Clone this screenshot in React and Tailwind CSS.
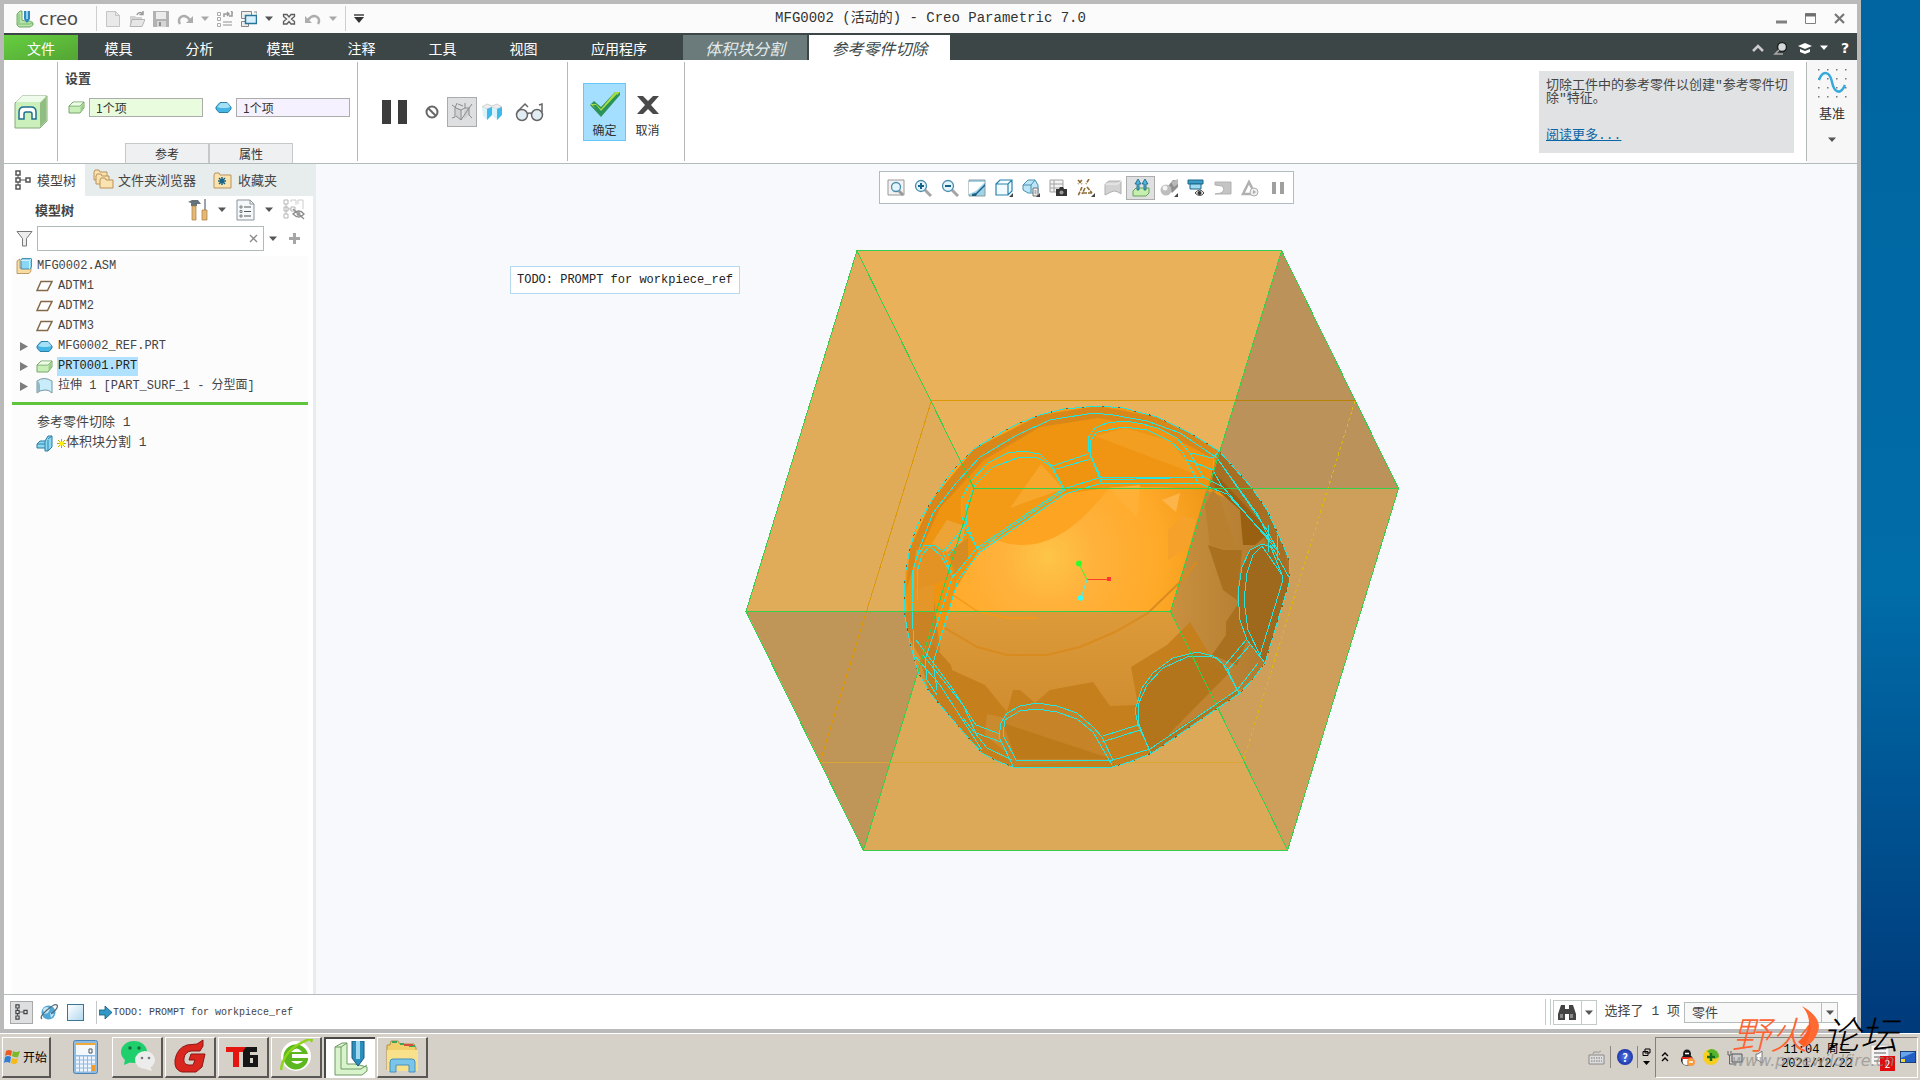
import clsx from 'clsx';

const CJK = "font-['Noto_Sans_CJK_SC',sans-serif]";
const MONO = "font-['Liberation_Mono','Noto_Sans_CJK_SC',monospace]";

function Svg({ w = 16, h = w, box, className, children }) {
  return (
    <svg width={w} height={h} viewBox={box || `0 0 ${w} ${h}`} fill="none" className={clsx('shrink-0', className)} aria-hidden="true">
      {children}
    </svg>
  );
}

const Arrow = ({ color = '#555' }) => (
  <Svg w={8} h={5}><path d="M0 0.500h8L4 5z" fill={color} /></Svg>
);

/* ---------- title bar icons ---------- */
const CreoMark = ({ size = 18 }) => (
  <Svg w={size} h={size} box="0 0 18 18">
    <path d="M1 4l3-3h2v9l3 1h5l3 2v2l-3 2H3l-2-2z" fill="#b9e3a9" stroke="#4f9a4a" strokeWidth=".8" />
    <path d="M1 14h13l3-2M3 4v9" stroke="#6db566" strokeWidth=".8" />
    <path d="M8 1h6v8l-3 4-3-4z" fill="#2f89bf" />
    <path d="M10 1h2v8h-2z" fill="#8ed0ee" />
  </Svg>
);

const NewIcon = () => (
  <Svg><path d="M1.500.5h9l4 4v11h-13z" fill="#e9e9e9" stroke="#c4c4c4" /><path d="M10.500.5v4h4" stroke="#c4c4c4" /></Svg>
);
const OpenIcon = () => (
  <Svg>
    <path d="M1 5h5l1 1h6v9H1z" fill="#d2d2d2" />
    <path d="M3 8.500h13L13 15.500H1z" fill="#e6e6e6" stroke="#b5b5b5" />
    <path d="M8 4c1-3 4-3 6-1M14 0v3.500h-3.500" stroke="#999" strokeWidth="1.500" />
  </Svg>
);
const SaveIcon = () => (
  <Svg>
    <path d="M0 0h16v16H0z" fill="#b2b2b2" />
    <path d="M3 1h10v7H3z" fill="#ececec" />
    <path d="M4 10h9v6H4z" fill="#d6d6d6" /><path d="M6 11h2v4H6z" fill="#8f8f8f" />
  </Svg>
);
const RedoIcon = ({ flip }) => (
  <Svg className={flip ? '-scale-x-100' : ''}>
    <path d="M3 13C-1 7 7 1 13 9" stroke="#adadad" strokeWidth="2.500" /><path d="M16 5v7H9z" fill="#adadad" />
  </Svg>
);
const RegenIcon = () => (
  <Svg>
    <path d="M.5 1.500h3v3h-3zM.5 6.500h3v3h-3zM.5 12.500h3v3h-3z" stroke="#aaa" />
    <path d="M6 14h9M6 11h9" stroke="#b5b5b5" strokeWidth="1.500" />
    <path d="M7 6V3h4M10 1l2 2-2 2M15 1v4h-3M14 0l2 2" stroke="#999" strokeWidth="1.500" />
  </Svg>
);
const WindowsIcon = () => (
  <Svg>
    <path d="M.5.5h10v7H.5z" fill="#eee" stroke="#888" /><path d="M.5 10.500h7v5h-7z" fill="#eee" stroke="#888" />
    <path d="M4.500 4.500h11v8h-11z" fill="#d8f0fb" stroke="#25759c" strokeWidth="1.500" />
    <path d="M13 1h3v3" stroke="#888" />
  </Svg>
);
const CloseDocIcon = () => (
  <Svg>
    <path d="M2.500 3.500h3.500l2 2.500 2-2.500h3.500v2L10.500 8l3 2.500v2.500h-3.500L8 10.500 6 13H2.500v-2.500l3-2.500-3-2.500z" fill="#f4f4f4" stroke="#5e5e5e" strokeWidth="1.300" />
  </Svg>
);

function QuickAccess() {
  const gray = '#a8a8a8';
  return (
    <div className="flex items-center gap-2 pl-3">
      <div className="flex w-[72px] items-center gap-[5px]">
        <CreoMark />
        <span className="font-['DejaVu_Sans',sans-serif] text-[18px] leading-[20px] text-[#4c4c4c]">creo</span>
      </div>
      <span className="h-[25px] w-px bg-[#cfcfcf]" />
      {[NewIcon, OpenIcon, SaveIcon, RedoIcon].map((Icon, i) => (
        <button key={i}><Icon /></button>
      ))}
      <Arrow color={gray} />
      <button><RegenIcon /></button>
      <button><WindowsIcon /></button>
      <Arrow />
      <button><CloseDocIcon /></button>
      <button><RedoIcon flip /></button>
      <Arrow color={gray} />
      <span className="h-[25px] w-px bg-[#cfcfcf]" />
      <Svg w={10} h={9}><path d="M0 1h10" stroke="#444" strokeWidth="1.500" /><path d="M0 3h10L5 9z" fill="#333" /></Svg>
    </div>
  );
}

function TitleBar() {
  return (
    <header className="grid h-[29px] grid-cols-[1fr_auto_1fr] items-center bg-[#fbfbfb]">
      <QuickAccess />
      <h1 className={`${MONO} text-[14px] text-[#333] whitespace-pre`}>MFG0002 (活动的) - Creo Parametric 7.0</h1>
      <div className="flex justify-end gap-[18px] pr-3">
        <button><Svg w={11}><path d="M0 9h11" stroke="#808080" strokeWidth="3" /></Svg></button>
        <button><Svg w={11}><path d="M.5.5h10v10H.5z" fill="#fff" stroke="#808080" /><path d="M0 2h11" stroke="#707070" strokeWidth="3" /></Svg></button>
        <button><Svg w={11}><path d="M1 1l9 9M10 1l-9 9" stroke="#777" strokeWidth="2.200" /></Svg></button>
      </div>
    </header>
  );
}

function MenuBar() {
  const menus = ['模具', '分析', '模型', '注释', '工具', '视图'];
  return (
    <nav className={`${CJK} flex h-[27px] bg-[#3c4646] pt-[2px] text-[14px] leading-[24px] text-white`}>
      <button className="w-[74px] bg-linear-to-br from-[#66cf40] to-[#53a534]">文件</button>
      {menus.map((m) => (
        <button key={m} className="w-[81px]">{m}</button>
      ))}
      <button className="mr-[9px] w-[110px]">应用程序</button>
      <button className="mr-[2px] w-[124px] bg-[#6b7b7b] text-[16px] text-[#e4eaea] italic">体积块分割</button>
      <button className="w-[141px] bg-white text-[16px] text-[#3c4646] italic">参考零件切除</button>
      <div className="ml-auto flex items-center gap-2 pr-[3px]">
        <Svg w={12} h={8}><path d="M1 7l5-5 5 5" stroke="#ccc" strokeWidth="2.500" /></Svg>
        <Svg w={18} h={16}><circle cx="10" cy="7" r="4.500" fill="#d5dbdb" stroke="#222" strokeWidth="1.500" /><path d="M7 10l-4 4h8" stroke="#aaa" strokeWidth="1.500" /></Svg>
        <Svg w={14} h={16}><path d="M0 6l7-3 7 3-7 3z" fill="#fff" /><path d="M2 9l5 2 5-2v3l-5 2-5-2z" fill="#fff" /></Svg>
        <Arrow color="#fff" />
        <button className="w-[18px] font-['DejaVu_Sans',sans-serif] text-[14px] font-bold">?</button>
      </div>
    </nav>
  );
}

/* ---------- part icons shared by ribbon and tree ---------- */
const GreenBlock = () => (
  <Svg w={17} h={13}>
    <path d="M1 5l4-4h11v6l-4 5H1z" fill="#c9efb8" stroke="#79a56e" /><path d="M1 5h11l4-4" stroke="#79a56e" />
    <path d="M2 4.500L5.500 1.500h9.500L12 4.500z" fill="#eefbe8" /><path d="M12.500 6l3-4v5l-3 4z" fill="#98cf88" />
  </Svg>
);
const BluePart = () => (
  <Svg w={17} h={13}>
    <path d="M1 6l4-4.500h7L16 6v2l-3 3.500H4L1 8z" fill="#45b6e4" stroke="#2c7fa8" />
    <path d="M2 6l4-4h6l3.500 4-4 1H6z" fill="#a6e0f7" />
  </Svg>
);

const RibbonDivider = () => <span className="my-[2px] w-px self-stretch bg-[#b4b8b8]" />;

function RefField({ id, label, Icon, className }) {
  return (
    <div className="flex items-center gap-1">
      <label htmlFor={id} aria-label={label}><Icon /></label>
      <input
        id={id}
        defaultValue="1个项"
        className={clsx('h-[19px] w-[114px] border border-[#acacac] px-[6px] text-[12px] text-[#333] outline-none', CJK, className)}
      />
    </div>
  );
}

function Ribbon() {
  return (
    <section className={`${CJK} flex h-[104px] border-b border-[#b4bbbb] bg-white text-[#333]`}>
      <div className="flex w-[53px] items-center justify-center">
        <Svg w={34}>
          <path d="M1 8l7-7h25v25l-7 7H1z" fill="#ccf0bc" stroke="#88a97e" />
          <path d="M2 7l6-6h24l-6 6z" fill="#effbea" /><path d="M26 8l6-6v24l-6 6z" fill="#8fbd82" />
          <path d="M5 24v-7q0-5 5-5h7q5 0 5 5v7h-4v-5q0-2-2-2h-4q-2 0-2 2v5z" fill="#fff" stroke="#1d7090" strokeWidth="1.500" />
        </Svg>
      </div>
      <RibbonDivider />
      <div className="flex w-[299px] flex-col pt-2 pr-1">
        <h2 className="pl-[7px] text-[13px] leading-[20px] font-bold text-[#444]">设置</h2>
        <div className="mt-[10px] flex gap-[12px] pl-[10px]">
          <RefField id="workpiece" label="工件" Icon={GreenBlock} className="bg-[#e9fcdd]" />
          <RefField id="refpart" label="参考零件" Icon={BluePart} className="bg-[#f5f1fe]" />
        </div>
        <div className="mt-auto flex pl-[67px]">
          <button className="h-[20px] w-[84px] border border-b-0 border-[#c4c8c8] bg-[#eff0f1] text-[12px]">参考</button>
          <button className="h-[20px] w-[84px] border border-b-0 border-[#c4c8c8] bg-[#eff0f1] text-[12px]">属性</button>
        </div>
      </div>
      <RibbonDivider />
      <div className="flex w-[209px] items-center pl-6">
        <button className="mr-[18px]"><Svg w={25} h={24}><path d="M0 0h9v24H0zM16 0h9v24h-9z" fill="#3c3c3c" /></Svg></button>
        <button className="mr-2"><Svg w={14}><circle cx="7" cy="7" r="5.500" stroke="#666" strokeWidth="2" /><path d="M3 3l8 8" stroke="#666" strokeWidth="2" /></Svg></button>
        <button className="flex h-[30px] w-[30px] items-center justify-center border border-[#ababab] bg-[#dedfe0]">
          <Svg w={22} h={20}>
            <path d="M5 6l5 2v9l-5-3zM13 8l5-2v7l-5 4z" fill="#d0d1d2" />
            <path d="M1 3l4 3 5 2 4-2 4 0 3-4M6 1L4 6v9l-3 1M10 8v10l-5-4M10 18l8-12M14 1v5M18 6v7l3 3M7 2l5 2" stroke="#8a8a8a" />
          </Svg>
        </button>
        <button className="mx-[5px]">
          <Svg w={20} h={18}>
            <path d="M0 4l5-3 5 2 5-2 5 3-5 2-5-2-5 2z" fill="#eee" stroke="#aaa" strokeWidth=".5" />
            <path d="M0 4l5 2v11l-4-4zM10 4l5 2v11l-5-5z" fill="#d9f3fd" /><path d="M5 6l5-2v8l-5 5zM15 6l5-2v8l-5 5z" fill="#3fb9ea" />
          </Svg>
        </button>
        <button className="ml-2">
          <Svg w={30} h={20}>
            <circle cx="7" cy="13" r="5.500" fill="#e2edf3" stroke="#666" strokeWidth="1.500" /><circle cx="22" cy="13" r="5.500" fill="#e2edf3" stroke="#666" strokeWidth="1.500" />
            <path d="M12 12q3-2 5 0M2 10l8-8 3 3M27 10V2l-3 1" stroke="#666" strokeWidth="1.500" />
          </Svg>
        </button>
      </div>
      <RibbonDivider />
      <div className="flex w-[116px] items-start pt-[23px] pl-[15px] text-[12px] leading-[16px]">
        <button className="flex h-[58px] w-[43px] flex-col items-center justify-end border border-[#66c8fa] bg-[#a5dfff] pb-[2px]">
          <Svg w={32} h={28} className="mb-1">
            <path d="M1 15l4-4 7 6L26 2h5v3L12 27z" fill="#2f9457" /><path d="M1 14h6l5 5L26 2h5L12 22z" fill="#a8dc3f" /><path d="M4 15h3l5 6L28 4v2L12 25z" fill="#28915c" />
          </Svg>
          确定
        </button>
        <button className="flex h-[58px] w-[43px] flex-col items-center justify-end pb-[3px]">
          <Svg w={22} h={18} className="mb-2"><path d="M0 0h6l5 5 5-5h6l-8 9 8 9h-6l-5-5-5 5H0l8-9z" fill="#4a4a4a" /></Svg>
          取消
        </button>
      </div>
      <RibbonDivider />
      <div className="ml-auto flex">
        <div className={`${MONO} mt-[11px] mr-3 flex h-[82px] w-[255px] flex-col bg-[#e0e2e3] pt-[8px] pl-[7px] text-[13px] leading-[13px] text-[#444]`}>
          <p className="whitespace-pre">{'切除工件中的参考零件以创建"参考零件切\n除"特征。'}</p>
          <a href="#more" className="mt-[24px] text-[#0b66a8] underline">阅读更多...</a>
        </div>
        <RibbonDivider />
        <button className="flex w-[50px] flex-col items-center bg-[#f7f7f7] pt-2 text-[13px] leading-[18px]">
          <Svg w={30}>
            {[1, 10, 19, 28].map((y) => [1, 10, 19, 28].map((x) => <path key={`${x}${y}`} d={`M${x} ${y}h1.500v1.500h-1.500z`} fill="#777" />))}
            <path d="M2 12C6 1 13 4 15 14s8 14 13 3" stroke="#35a9dc" strokeWidth="2.500" />
          </Svg>
          <span className="mt-[6px] mb-[15px]">基准</span>
          <Arrow />
        </button>
      </div>
    </section>
  );
}

/* ---------- model tree ---------- */
const TreeGlyph = ({ color = '#555' }) => (
  <Svg w={16} h={20}>
    <path d="M1 1h4v4H1zM1 8h4v4H1zM1 15h4v4H1zM11 8h4v4h-4z" stroke={color} strokeWidth="1.500" />
    <path d="M3 5v3M3 12v3M5 10h6" stroke={color} />
  </Svg>
);
const Folder = ({ x, y, w = 13, h = 10 }) => (
  <path d={`M${x} ${y + 2}l1-2h4l1 2h${w - 6}v${h - 2}H${x}z`} fill="#fbe3b0" stroke="#b9925c" />
);
const AsmIcon = () => (
  <Svg w={16}><path d="M1 3l3-2v9h11v3l-2 2.500H1z" fill="#fbdca0" stroke="#ad8850" strokeWidth=".8" /><path d="M5 2.500l1-2h9.500V9L14 11H5z" fill="#8ad6f4" stroke="#2a7aa2" strokeWidth=".8" /><path d="M5 2.500h8.500l2-2M13.500 3v8" stroke="#e3f6fd" strokeWidth=".8" /></Svg>
);
const PlaneIcon = () => (
  <Svg w={17} h={12}><path d="M5 1.500h11l-4.500 9H1z" fill="#fff" stroke="#83694a" strokeWidth="1.500" /></Svg>
);
const SurfIcon = () => (
  <Svg w={17}><path d="M1 3q7-5 15 0v12q-3-3-6-3t-6 1l-3 2z" fill="#c9ecfa" stroke="#7497a5" /><path d="M1 3q3 1 3 5v5l-3 2z" fill="#92b6c4" /></Svg>
);
const SplitIcon = () => (
  <Svg w={17} h={17}><path d="M1 9l3-3h5l3-5h4v11l-4 4H9v-3H1z" fill="#8fd6f0" stroke="#287a9f" /><path d="M9 6v7M12 5v11M1 9h8M12 4l4-3" stroke="#2b86ad" /></Svg>
);
const Twisty = () => <Svg w={8} h={9}><path d="M0 0l8 4.500L0 9z" fill="#7d7d7d" /></Svg>;

const TREE = [
  { label: 'ADTM1', Icon: PlaneIcon },
  { label: 'ADTM2', Icon: PlaneIcon },
  { label: 'ADTM3', Icon: PlaneIcon },
  { label: 'MFG0002_REF.PRT', Icon: BluePart, open: true },
  { label: 'PRT0001.PRT', Icon: GreenBlock, open: true, selected: true },
  { label: '拉伸 1 [PART_SURF_1 - 分型面]', Icon: SurfIcon, open: true },
];

function Sidebar() {
  return (
    <aside className={`${CJK} flex w-[312px] flex-col border-r-[3px] border-[#e7ecec] bg-white text-[#444]`}>
      <div className="-mr-[3px] flex h-[32px] bg-[#e7ecec] pb-px text-[13px]">
        <button className="-mb-px flex w-[81px] items-center gap-[6px] bg-white pl-[11px]"><TreeGlyph />模型树</button>
        <button className="flex w-[119px] items-center gap-1 pl-2">
          <Svg w={21}><Folder x={1} y={1} /><Folder x={3} y={5} /><Folder x={7} y={9} /></Svg>文件夹浏览器
        </button>
        <button className="flex items-center gap-[6px] pl-[9px]">
          <Svg w={19} h={18}><Folder x={1} y={2} w={17} h={15} /><path d="M9 6v8M5 10h8M6 7l6 6M12 7l-6 6" stroke="#17658a" strokeWidth="1.500" /></Svg>收藏夹
        </button>
      </div>
      <div className="flex h-[27px] items-center pr-2 pl-[31px]">
        <h2 className="mr-auto text-[13px] font-bold">模型树</h2>
        <div className="flex items-center gap-[10px]">
          <Svg w={20} h={22}>
            <path d="M0 3l4-2h6l3 4H9v2H3V4z" fill="#66727a" /><path d="M4 7h4v14H4z" fill="#e4b876" stroke="#a97d40" strokeWidth=".7" />
            <path d="M16 0h2v11h-2z" fill="#9aa4aa" /><path d="M14 11h5v10h-5z" fill="#e4b876" stroke="#a97d40" strokeWidth=".7" />
          </Svg>
          <Arrow />
          <Svg w={19} h={22}>
            <path d="M1 1h13l4 4v16H1z" fill="#f4f8fa" stroke="#8b9399" /><path d="M14 1v4h4" stroke="#8b9399" />
            <path d="M8 8h7M8 12.500h7M8 17h7" stroke="#555" /><path d="M4 7h2v2H4zM4 11.500h2v2H4zM4 16h2v2H4z" stroke="#666" strokeWidth=".8" />
          </Svg>
          <Arrow />
          <Svg w={22}>
            <path d="M1 1h4v4H1zM1 8h4v4H1zM1 15h4v4H1zM8 8h4v4H8zM3 5v10M5 10h3" stroke="#b5b5b5" />
            <path d="M8 3V1h5v5M15 5V1h5v9" stroke="#ccc" /><path d="M10 15q6-6 11 0-5 6-11 0zM10 10l11 10" stroke="#8d8d8d" strokeWidth="1.300" /><circle cx="15.500" cy="15" r="2" fill="#999" />
          </Svg>
        </div>
      </div>
      <div className="mb-[2px] flex h-[31px] items-center gap-[4px] pl-3">
        <label htmlFor="tree-filter" aria-label="过滤器">
          <Svg w={17} h={17}><path d="M1 1.500h15l-5.500 7V16h-4V8.500z" fill="#eee" stroke="#777" /></Svg>
        </label>
        <div className="flex h-[25px] w-[227px] items-center border border-[#b0baba]">
          <input id="tree-filter" className="min-w-0 flex-1 px-1 text-[12px] outline-none" />
          <button className="mr-[5px]"><Svg w={9}><path d="M1 1l7 7M8 1L1 8" stroke="#8a8a8a" strokeWidth="1.300" /></Svg></button>
        </div>
        <div className="flex items-center gap-[11px] pl-px">
          <Arrow />
          <button><Svg w={13}><path d="M6.500 1v11M1 6.500h11" stroke="#a6a6a6" strokeWidth="3" /></Svg></button>
        </div>
      </div>
      <div className={`${MONO} mr-[5px] ml-2 flex-1 bg-[#fcfcfc] text-[12px] leading-[20px] whitespace-pre`}>
        <div className="flex h-[20px] items-center gap-[5px] pl-1"><AsmIcon />MFG0002.ASM</div>
        <ul>
          {TREE.map(({ label, Icon, open, selected }) => (
            <li key={label} className="flex h-[20px] items-center gap-[4px] pl-2">
              <span className="w-[12px]">{open && <Twisty />}</span>
              <Icon />
              <span className={clsx('px-[1px] leading-[19px]', selected && 'bg-[#b0e2ff] text-[#222]')}>{label}</span>
            </li>
          ))}
        </ul>
        <div className="my-[6px] h-[3px] bg-[#5fc63c]" />
        <div className="mt-2 h-[20px] pl-[25px] text-[13px]">参考零件切除 1</div>
        <div className="flex h-[20px] items-center gap-1 pl-6 text-[13px]">
          <SplitIcon />
          <span className="flex items-center">
            <Svg w={9} h={9}><path d="M4.500 0v9M0 4.500h9M1 1l7 7M8 1L1 8" stroke="#b5a800" /><path d="M2.500 2.500h4v4h-4z" fill="#ffee00" /></Svg>
            体积块分割 1
          </span>
        </div>
      </div>
    </aside>
  );
}

/* ---------- in-graphics toolbar ---------- */
const Corner = () => <path d="M18 18h-4l4-4z" fill="#444" />;
const Lens = ({ sign }) => (
  <>
    <path d="M11 11l6 6" stroke="#a5a5a5" strokeWidth="3" />
    <circle cx="7" cy="7" r="5.500" fill="#e2f4fc" stroke="#4b8cab" strokeWidth="1.300" />
    {sign && <path d={sign} stroke="#17618a" strokeWidth="2" />}
  </>
);

const VIEW_TOOLS = [
  <><path d="M1 1h16v15H1z" fill="#f2f2f2" stroke="#999" /><path d="M12 12l4 4" stroke="#999" strokeWidth="3" /><circle cx="9" cy="8" r="4.500" fill="#e2f4fc" stroke="#4b8cab" strokeWidth="1.300" /></>,
  <Lens sign="M4 7h6M7 4v6" />,
  <Lens sign="M4 7h6" />,
  <><path d="M1 1h16v16H1z" fill="#9dd4ea" stroke="#8b9a9f" /><path d="M1 3h16L8 12l-7 3z" fill="#fff" /><path d="M4 17v-2l4-1 9-9v2l-8 8-1 2z" fill="#1c5f83" /></>,
  <><path d="M1 5l4-4h12v11l-4 4H1zM1 5h12l4-4M13 5v11" fill="#f2fbff" stroke="#2583ae" strokeWidth="1.200" /><Corner /></>,
  <><path d="M1 6l5-5h7l3 5v8H6l-5-3z" fill="#bce6f7" stroke="#4590b1" /><path d="M1 6h8l4-5M9 6v7" stroke="#4590b1" /><path d="M11 9h5v8h-5z" fill="#eee" stroke="#777" /><path d="M12.500 12h2M12.500 14h2" stroke="#777" /><Corner /></>,
  <><path d="M1 1h13v12H1zM5 1v12M1 5h13M1 9h13" fill="#f3f3f3" stroke="#a2a2a2" /><path d="M7 10h3l1-2h3l1 2h3v7H7z" fill="#333" /><circle cx="12.500" cy="13.500" r="2" fill="#999" /></>,
  <><path d="M1 1l4 4M5 1L1 5M12 0L9 5M5 8l-4 9M8 9L5 15M6 14h10M10 8l5 6" stroke="#8d6c36" strokeWidth="1.600" strokeDasharray="4 1" /><Corner /></>,
  <><path d="M1 5l4-3h12v13l-3-2q-4-2-7 0l-6 3z" fill="#d2d2d2" stroke="#b0b0b0" /><path d="M1 5h13l3-3" stroke="#f2f2f2" /></>,
  <><path d="M1 12l3-3h13v5l-3 3H1z" fill="#c5efaf" stroke="#67a158" /><path d="M5 11V5H3l3-5 3 5H7v6zM12 11V5h-2l3-5 3 5h-2v6z" fill="#4ab4dc" stroke="#195f81" strokeWidth=".8" /></>,
  <><path d="M8 7l5-6h5v7l-6 6z" fill="#8f8f8f" /><path d="M11 3l7-3v5l-4 3z" fill="#b9b9b9" /><circle cx="6" cy="11" r="5.500" fill="#bdbdbd" /><circle cx="5" cy="9" r="2.500" fill="#f3f3f3" /><Corner /></>,
  <><path d="M1 1h15v4H1z" fill="#3a9cc6" stroke="#1c6689" /><path d="M3 5h11v5H3z" fill="#9edaf0" stroke="#1c6689" /><path d="M8 14q5-6 9 0-4 5-9 0z" fill="#eee" stroke="#444" /><circle cx="12.500" cy="14" r="2" fill="#333" /></>,
  <path d="M1 3h16v12H1l6-1q5-3 1-7l-7-1z" fill="#c4c4c4" stroke="#b2b2b2" />,
  <><path d="M8 3l6 12H2z" stroke="#b0b0b0" strokeWidth="2.500" /><circle cx="13" cy="13" r="4" fill="#eee" stroke="#b0b0b0" /><path d="M12 11l3 2-3 2z" fill="#aaa" /></>,
  <path d="M3 3h4v12H3zM11 3h4v12h-4z" fill="#a0a0a0" />,
];

function ViewToolbar() {
  return (
    <div className="relative mx-auto mt-[7px] flex h-[33px] w-[415px] items-center border border-[#b2bbbf] bg-white px-[2px]">
      {VIEW_TOOLS.map((glyph, i) => (
        <button key={i} className={clsx('flex h-[24px] flex-1 items-center justify-center', i === 9 && 'border border-[#adadad] bg-[#dfe0e1]')}>
          <Svg w={18}>{glyph}</Svg>
        </button>
      ))}
    </div>
  );
}

/* ---------- 3D model: workpiece block round the reference part ---------- */
const BALL =
  'M1098 406L1063 409L1040 415L1017 424L995 436L974 449L953 470L932 500L917 526L910 548L906 570L904 590L905 617L910 643L918 672L930 693L963 732L982 753L997 761L1013 767H1112L1130 762L1152 753L1240 693L1254 678L1265 663L1290 580L1289 560L1284 547L1267 510L1252 488L1219 451L1190 433L1157 417L1123 408Z';

const FACETS = [
  // upper shell, between the rim and the front face
  ['M906 600L904 580L913 548L935 505L975 457L1020 430L1070 416L1130 417L1180 433L1222 462L1233 500L1205 490L1165 487H1115L1065 494L978 552L955 590L933 665L912 640Z', '#ef9411'],
  ['M1098 406L1040 415L974 449L932 500L910 548L906 590L916 560L940 508L984 460L1040 427L1098 418L1160 430L1219 462L1219 451L1190 433L1157 417Z', '#d98718'],
  ['M972 505Q980 545 1023 545T1109 488L1063 494L990 545Z', '#fda522'],
  ['M932 543L947 520L965 526L960 560L948 553Z', '#eda437'],
  ['M916 550L935 547L934 611L910 614Z', '#e49728'],
  ['M904 611H934V600L940 650L925 665L910 640Z', '#c98325'],
  ['M948 552L968 538V558L955 575Z', '#d58c22'],
  ['M1110 488L1140 485L1137 518L1125 505L1115 495Z', '#ffb037'],
  ['M1162 500L1180 493L1176 512Z', '#fdb54a'],
  ['M1168 530L1183 515L1196 520L1190 545L1168 560Z', '#f5a12a'],
  // right, inside the shaded side face
  ['M1213 490L1221 500L1237 552L1210 545L1205 505Z', '#b9812f'],
  ['M1219 451L1252 488L1267 510L1284 547L1290 580L1280 570L1262 535L1227 495L1208 488Z', '#a86f22'],
  ['M1212 470L1270 532L1255 545L1243 545L1240 510L1215 488Z', '#9a6011'],
  ['M1208 545L1224 550L1242 550L1237 600L1223 590Z', '#a97020'],
  ['M1238 604L1226 622V635L1212 655L1237 665L1247 640Z', '#a9711f'],
  // lower, below the workpiece horizon
  ['M933 645L951 665L952 670L985 685L1007 712L1013 690H1020L1035 703L1050 690L1093 682L1110 706L1138 705L1131 667L1167 645L1190 622L1210 655L1238 690L1152 753L1112 767H1013L982 753L930 693L920 660Z', '#c57f1c'],
  ['M987 714L1005 718L1001 740L1016 760L985 735Z', '#ca8b2f'],
];

const POCKETS = [
  ['M978 550L965 527L961 513V500L971 481L988 463L1007 453L1023 451L1040 454L1051 465L1065 490Z', '#f39a16', 'M976 547L967 525L966 507L975 485L993 467L1020 457L1038 458L1052 467L1063 488'],
  ['M1102 480L1089 452L1088 438L1095 428L1107 423L1125 421L1143 424L1160 429L1177 438L1190 453L1203 477Z', '#ef9513', 'M1102 484L1090 455V441L1097 432L1123 427L1147 430L1170 441L1183 453L1198 483'],
  ['M914 590L913 570L917 556L925 545H935L943 552L953 578', '#e29323', 'M917 600V572L922 555L930 546L941 556L949 570'],
  ['M1013 766L999 737L1001 723L1007 713L1020 706L1037 703L1057 706L1077 713L1093 727L1102 737L1113 760', '#c78327', 'M1016 760L1003 735L1005 720L1020 711L1037 709L1057 712L1077 719L1093 732L1112 765'],
  ['M1151 753L1138 725L1135 710L1142 688L1153 673L1173 658L1197 652L1213 656L1223 664L1239 693', '#b1761f', 'M1149 749L1138 722V705L1147 685L1163 668L1187 657L1207 656L1217 658L1227 668L1237 690'],
  ['M1265 663L1247 640L1240 620L1238 593L1242 567L1250 550L1262 544L1272 547L1290 579', '#9e691c', 'M1260 655L1248 630L1244 600L1247 573L1253 555L1262 546L1282 575V583'],
];

const SEAMS = [
  'M912 603L913 570L920 547L933 513L957 482L980 457L1017 435L1050 420L1093 413L1113 415L1147 421L1180 433L1217 458L1267 530L1280 555',
  'M1063 489L1102 477H1203L1223 487L1277 550',
  'M1065 494L1102 483H1198L1227 494L1272 542',
  'M1063 489L977 548L952 578L925 660L927 680L937 695',
  'M1065 494L980 552L958 580L933 663L937 690',
  'M1052 466L1088 454M1053 470L1090 459',
  'M943 552L963 528M947 557L967 532',
  'M1190 453L1213 458L1219 451M1188 460L1213 470M1213 458V470L1222 487',
  'M1217 458L1258 515L1270 540M1268 525V552M1277 535V560M1270 545L1282 575',
  'M912 603L914 655L940 685L982 750M916 640L950 685L976 725L1000 734',
  'M923 655L963 705L976 733L1001 742M963 718L987 748L1012 760',
  'M1016 760H1113M1013 767H1112',
  'M1103 736L1138 725M1102 742L1140 730M1113 760L1150 749L1237 690L1258 663',
  'M1225 665L1246 640M1228 670L1250 645M1260 655L1282 583',
];

function Model() {
  return (
    <svg viewBox="316 164 1541 830" className="absolute inset-0 h-full w-full" role="img" aria-label="MFG0002">
      <defs>
        <radialGradient id="glow" gradientUnits="userSpaceOnUse" cx="1048" cy="557" r="210">
          <stop offset="0" stopColor="#fdc548" />
          <stop offset=".22" stopColor="#ffb23c" />
          <stop offset=".55" stopColor="#ffa928" />
          <stop offset="1" stopColor="#e58a0c" />
        </radialGradient>
        <linearGradient id="under" x1="0" y1="0" x2="0" y2="1">
          <stop offset="0" stopColor="#dd9a39" />
          <stop offset="1" stopColor="#c8862c" />
        </linearGradient>
        <linearGradient id="side" x1="0" y1="0" x2="1" y2="0">
          <stop offset="0" stopColor="#c8903f" />
          <stop offset="1" stopColor="#a97228" />
        </linearGradient>
        <clipPath id="ball"><path d={BALL} /></clipPath>
      </defs>
      <path d="M857 251H1281.500L1208 488.500H974Z" fill="#e9b15a" />
      <path d="M857 251L974 488.500L936.500 611H746Z" fill="#e1ac5a" />
      <path d="M1281.500 251L1398.500 488.500H1208Z" fill="#bb9259" />
      <path d="M1208 488.500H1398.500L1287.500 850L1170.500 611Z" fill="#cd9f5b" />
      <path d="M746 611H936.500L863.500 850Z" fill="#bf9558" />
      <path d="M936.500 611H1170.500L1287.500 850H863.500Z" fill="#dca959" />
      <g stroke="#dc9806" shapeRendering="crispEdges">
        <path d="M931.500 400.500H1235M931.500 400.500L820 762" />
        <path d="M1235 400.500H1355" stroke="#b88108" />
        <path d="M820 762.500H1243" stroke="#d9a534" />
        <path d="M1355 401L1243 762" stroke="#e0b90f" strokeDasharray="3 3" />
      </g>
      <g clipPath="url(#ball)">
        <path d={BALL} fill="url(#glow)" />
        <path d="M900 611H1170.500L1295 640V775H900Z" fill="url(#under)" />
        <path d="M1221 440L1300 440V690H1210L1170.500 611Z" fill="url(#side)" />
        {FACETS.map(([d, fill]) => <path key={d} d={d} fill={fill} />)}
        {POCKETS.map(([d, fill]) => <path key={d} d={d} fill={fill} />)}
        <path d="M1041 464L1010 508L1063 489Z" fill="#f7a72c" />
        <path d="M1095 436L1198 475L1170 441L1125 428Z" fill="#f29e20" />
        <path d="M1003 723L1112 759H1016Z" fill="#bd7a1b" />
        <path d="M1195 657L1228 674L1168 735L1150 749L1137 712L1150 680Z" fill="#b3751b" />
        <path d="M1228 674L1237 690L1168 735Z" fill="#c08433" />
        <path d="M1170.500 611L1208 488.500L1221 451L1205 500Z" fill="#b77e31" />
        <path d="M945 628L977 647L1007 655H1047L1080 647L1115 632L1148 613L1180 582L1197 562" stroke="#d98b1f" strokeWidth="2" fill="none" />
        <path d="M953 595L977 611L1007 618H1038" stroke="#f39a18" strokeWidth="1.500" fill="none" />
      </g>
      <g fill="none" shapeRendering="crispEdges">
        <path d={BALL} stroke="#7d5c1f" />
        <path d={BALL} stroke="#29e3dd" strokeDasharray="14 2" />
        <g stroke="#29e3dd">
          {POCKETS.map(([d, , inner]) => <path key={d} d={`${d}${inner}`} />)}
          {SEAMS.map((d) => <path key={d} d={d} />)}
        </g>
        <g stroke="#35cf4d">
          <path d="M857 250.500H1281.500L1398.500 488.500L1287.500 850.500H863.500L746 611.500Z" />
          <path d="M857 251L974 488.500L863.500 850M974 488.500H1398" />
          <path d="M1281.500 251L1170.500 611.500L1287.500 850M1170.500 611.500H746" />
        </g>
      </g>
      <path d="M1087 579.500L1079 564" stroke="#3bf52c" /><circle cx="1079" cy="563.500" r="3" fill="#2dff2d" />
      <path d="M1087 579.500H1109" stroke="#ff3c2c" /><path d="M1107 577h4v4h-4z" fill="#ff3434" />
      <path d="M1087 579.500L1081 598" stroke="#3cf5f5" /><circle cx="1080.500" cy="598" r="2.700" fill="#33ffff" />
    </svg>
  );
}

function Viewport() {
  return (
    <main className="relative flex-1 bg-[#f8f9fc]">
      <Model />
      <ViewToolbar />
      <div className={`${MONO} absolute top-[102px] left-[194px] border border-[#b5d9ee] bg-white px-[6px] text-[12px] leading-[26px] text-[#222]`}>
        TODO: PROMPT for workpiece_ref
      </div>
    </main>
  );
}

function StatusBar() {
  return (
    <footer className="flex h-[35px] items-center border-t border-[#b4bbbe] bg-white pl-[6px] text-[#444]">
      <button className="flex h-[23px] w-[23px] items-center justify-center border border-[#a8a8a8] bg-[#dedfe0]">
        <Svg w={13} h={16} box="0 0 16 20"><path d="M1 1h4v4H1zM1 8h4v4H1zM1 15h4v4H1zM11 8h4v4h-4z" stroke="#444" strokeWidth="1.500" /><path d="M3 5v3M3 12v3M5 10h6" stroke="#444" /></Svg>
      </button>
      <button className="ml-[7px]">
        <Svg w={18}><circle cx="8.500" cy="9.500" r="7" fill="#4da6d6" /><path d="M3 6q4-4 7 0l-2 4-4 1zM10 10l4 1-3 4z" fill="#c5e8f7" /><path d="M2 16Q-1 14 7 7t10-5q2 3-6 9" stroke="#5b6a73" strokeWidth="1.300" /></Svg>
      </button>
      <button className="ml-[9px] h-[17px] w-[17px] border border-[#3c7590] bg-linear-to-br from-white to-[#b3d9ee]" />
      <span className="mr-[2px] ml-3 h-[23px] w-px bg-[#c6c6c6]" />
      <Svg w={13} h={13}><path d="M0 4h6V0l7 6.500L6 13V9H0z" fill="#2f98c6" stroke="#145a7c" strokeWidth=".8" /></Svg>
      <p className={`${MONO} ml-px text-[10px]`}>TODO: PROMPT for workpiece_ref</p>
      <div className="ml-auto flex items-center pr-[19px]">
        <span className="mr-1 h-[26px] w-px bg-[#c4c9c9]" />
        <span className="mr-[2px] h-[26px] w-px bg-[#c4c9c9]" />
        <button className="flex h-[25px] w-[44px] items-center border border-[#c4c9c9]">
          <span className="flex h-full w-[28px] items-center justify-center border-r border-[#c4c9c9]">
            <Svg w={18} h={16}><path d="M3 1h4v4h4V1h4l3 9v6h-7v-6H7v6H0v-6z" fill="#444" /><path d="M2 10h3v4H2zM12 10h3v4h-3z" fill="#8a8a8a" /></Svg>
          </span>
          <span className="flex flex-1 justify-center"><Arrow /></span>
        </button>
        <label htmlFor="filter" className={`${MONO} mr-1 ml-2 text-[13px] whitespace-pre`}>选择了 1 项</label>
        <div className="relative">
          <select id="filter" className={`${CJK} block h-[21px] w-[154px] appearance-none border border-[#b5bcbc] bg-[#f8f8f8] pl-[7px] text-[13px] leading-[18px]`}>
            <option>零件</option>
          </select>
          <span className="pointer-events-none absolute inset-y-0 right-0 flex w-[17px] items-center justify-center border-l border-[#b5bcbc]"><Arrow /></span>
        </div>
      </div>
    </footer>
  );
}

/* ---------- taskbar ---------- */
const TASKS = [
  <>
    <ellipse cx="14" cy="13" rx="13" ry="11" fill="#1fcf6c" /><path d="M5 20l-1 6 7-3z" fill="#1fcf6c" />
    <ellipse cx="25" cy="21" rx="10" ry="9" fill="#ececec" /><path d="M30 27l2 5-7-2z" fill="#ececec" />
    <circle cx="10" cy="9" r="1.700" fill="#176b3b" /><circle cx="19" cy="9" r="1.700" fill="#176b3b" />
    <circle cx="22" cy="19" r="1.300" fill="#777" /><circle cx="29" cy="19" r="1.300" fill="#777" />
  </>,
  <path d="M30 1v6l-3 5h-9q-6 1-7 7-1 6 4 7h5l2-5h-6l2-6h14l-3 13-6 5H9q-8-2-7-12Q4 9 14 6l10-1z" fill="#d9261f" stroke="#8f1512" />,
  <>
    <path d="M0 8h20v5h-7v15H7V13H0z" fill="#e5160f" />
    <path d="M20 8h11v5h-7v3h8v12H17V12zM24 19v5h3v-5z" fill="#161616" fillRule="evenodd" />
  </>,
  <>
    <circle cx="17" cy="17" r="15" fill="#fff" />
    <path d="M29 21A12.500 12.500 0 1 1 29 15H13v4h16zM12 13h11q-5-7-11 0zM12 22q6 6 12 0z" fill="#5db81d" fillRule="evenodd" />
    <path d="M2 31Q4 14 20 5t12-2" stroke="#8ed41b" strokeWidth="2.500" />
  </>,
  <>
    <path d="M2 6l7-4h5v21h8l12 3v4l-5 4H2z" fill="#d9f3cd" stroke="#6d9a62" /><path d="M8 6v22h20l6-4M2 6h6l6-4" stroke="#6d9a62" />
    <path d="M19 0h12v17l-6 8-6-8z" fill="#2b8fbd" stroke="#185a7e" /><path d="M23 0h4v18h-4z" fill="#9ed9f0" />
  </>,
  <>
    <path d="M2 6h3l1-4h7l2 3h14l2 4v22H2z" fill="#f1d06b" stroke="#b6913a" /><path d="M2 11h31v21H2z" fill="#f9e18c" />
    <path d="M7 3h5M15 5h4M24 7h6" stroke="#3fa45b" strokeWidth="2" /><path d="M19 6h9" stroke="#d6503e" strokeWidth="2" />
    <path d="M5 33V23q0-3 3-3h19q3 0 3 3v10h-6v-7H11v7z" fill="#7cc5ea" stroke="#4592bd" />
  </>,
];

const raised = 'border-t border-l border-r-2 border-b-2 border-t-white border-l-white border-r-[#5a5854] border-b-[#5a5854]';

function Taskbar() {
  return (
    <div className={`${CJK} relative flex h-[47px] items-center border-t border-white bg-[#d5d0c8] px-[2px] text-black`}>
      <button className={clsx('flex h-[41px] w-[49px] items-center gap-[2px] pl-px text-[12px]', raised)}>
        <Svg w={17} h={15}>
          <path d="M2 2q3-2 6 0L7 7Q4 5 1 7z" fill="#ea5a26" /><path d="M9 2q3 2 7 0l-2 6q-3 1-6-1z" fill="#7db928" />
          <path d="M1 8q3-2 6 0l-1 6q-3-2-6 0z" fill="#2f7fd6" /><path d="M8 9q3 2 6 0l-1 5q-3 2-6 0z" fill="#f5b91c" />
        </Svg>
        开始
      </button>
      <button className="mr-[14px] ml-[22px]">
        <Svg w={25} h={34}>
          <rect x=".5" y=".5" width="24" height="33" rx="2" fill="#8dbbe4" stroke="#4b83b5" />
          <path d="M3 3h19v12H3z" fill="#f4f8fb" /><path d="M3 3h19v2H3z" fill="#f1a93c" />
          {[18, 22, 26].map((y) => <path key={y} d={`M3 ${y}h19`} stroke="#eef5fb" strokeWidth="3" strokeDasharray="3 1" />)}
          <path d="M3 30h15" stroke="#eef5fb" strokeWidth="3" strokeDasharray="3 1" /><path d="M19 25h3v6h-3z" fill="#f09b2c" /><path d="M16 9h3v4h-3z" stroke="#456" />
        </Svg>
      </button>
      <div className="flex gap-[2px]">
        {TASKS.map((glyph, i) => (
          <button
            key={i}
            className={clsx('flex h-[41px] w-[51px] items-center justify-center', i === 4 ? 'border-t-2 border-l-2 border-t-[#4a4844] border-l-[#4a4844] bg-white' : raised)}
          >
            <Svg w={35}>{glyph}</Svg>
          </button>
        ))}
      </div>
      <div className="ml-auto flex items-center gap-1">
        <Svg w={17} h={15} className="mr-px"><path d="M1 5h15v9H1z" fill="#ddd" stroke="#8a8a8a" /><path d="M3 8h11M3 11h11" stroke="#777" strokeDasharray="1.500 1" /><path d="M5 4q0-3 3-2t5-1" stroke="#999" /></Svg>
        <span className="mr-[2px] h-[22px] w-px bg-[#8b8883]" />
        <button className="flex h-[16px] w-[16px] items-center justify-center rounded-full bg-radial from-[#5a7af2] to-[#0a168a] text-[11px] font-bold text-white">?</button>
        <span className="h-[22px] w-px bg-[#8b8883]" />
        <Svg w={9} h={18}><path d="M3 1h5v4H3zM1 3.500h5v4H1z" fill="#d5d0c8" stroke="#000" /><path d="M1 13h7l-3.500 4z" fill="#000" /></Svg>
        <div className="flex h-[41px] w-[263px] items-center border border-t-[#84817c] border-l-[#84817c] border-r-white border-b-white pl-[5px]">
          <Svg w={8} h={10}><path d="M1 4l3-3 3 3M1 9l3-3 3 3" stroke="#000" strokeWidth="1.300" /></Svg>
          <Svg w={16} h={17} className="ml-[10px]"><ellipse cx="8" cy="5" rx="4" ry="4.500" fill="#1a1a1a" /><ellipse cx="8" cy="11" rx="6" ry="5.500" fill="#1a1a1a" /><ellipse cx="7" cy="12" rx="3.500" ry="4" fill="#fff" /><path d="M3 8h10v2H3z" fill="#e62b1c" /><circle cx="12" cy="13" r="4" fill="#f79a3e" /><path d="M10 13h4M6 4.500h4" stroke="#fff" strokeWidth="1.500" /></Svg>
          <Svg w={16} className="ml-2"><circle cx="8" cy="8" r="8" fill="#f6cf20" /><path d="M8 0a8 8 0 0 1 8 8l-4 2L4 2z" fill="#55b62e" /><path d="M8 4v8M4 8h8" stroke="#156b1b" strokeWidth="2.500" /></Svg>
          <Svg w={16} h={15} className="ml-2"><path d="M5 4h10v8H5z" fill="#ccc" stroke="#555" /><path d="M1 1v4h3V1M2.500 5v9H9" stroke="#666" /></Svg>
          <Svg w={8} h={14} className="ml-3"><path d="M1 4h2l4-3v12l-4-3H1z" fill="#fff" stroke="#777" /></Svg>
          <div className={`${MONO} ml-[18px] text-center text-[12px] leading-[14px] whitespace-pre`}>
            <div>11:04 周二</div>
            <div>2021/12/22</div>
          </div>
          <div className="relative ml-4 h-[27px] w-[26px]">
            <Svg w={22} h={22}><path d="M2 1h18v20H2z" fill="#f5f5f5" stroke="#bbb" /><path d="M5 5h12M5 9h12M5 13h12M5 17h8" stroke="#aaa" strokeWidth="2" /></Svg>
            <span className="absolute right-0 bottom-0 h-[15px] w-[15px] bg-[#df0d0d] text-center text-[10px] leading-[15px] text-white">2</span>
          </div>
          <Svg w={16} h={12} className="ml-[5px]"><path d="M0 0h16v12H0z" fill="#2460c4" stroke="#123" /><path d="M1 1h14l-14 6z" fill="#69a5ea" /><path d="M1 8h4v3H1z" fill="#f0d13e" /></Svg>
        </div>
      </div>
    </div>
  );
}

function Watermark() {
  return (
    <div className={`${CJK} pointer-events-none absolute right-[22px] bottom-[10px] w-[166px]`}>
      <Svg w={24} h={42} className="absolute -top-[8px] left-[64px]"><path d="M6 0Q30 14 20 30 16 39 5 42 14 32 13 20 14 9 6 0z" fill="#ff6a33" /><path d="M13 14q5 11-5 27L2 36Q14 26 13 14z" fill="#ff5c26" /></Svg>
      <div className="flex justify-between text-[38px] leading-[38px] font-light italic">
        <span className="text-[#ff6332]">野火</span>
        <span className="text-black">论坛</span>
      </div>
      <div className="font-['DejaVu_Sans',sans-serif] text-[16px] leading-[18px] text-[#8d8d8d]/70 italic">www.proewildfire.cn</div>
    </div>
  );
}

export default function App() {
  return (
    <div className="relative flex min-h-screen flex-col overflow-hidden bg-linear-to-b from-[#0065a0] from-0% via-[#006ca8] via-55% to-[#003a7b] to-95%">
      <div className="mr-[59px] flex flex-1 flex-col border-4 border-[#bababa]">
        <TitleBar />
        <MenuBar />
        <Ribbon />
        <div className="flex flex-1 items-stretch">
          <Sidebar />
          <Viewport />
        </div>
        <StatusBar />
      </div>
      <Taskbar />
      <Watermark />
    </div>
  );
}
